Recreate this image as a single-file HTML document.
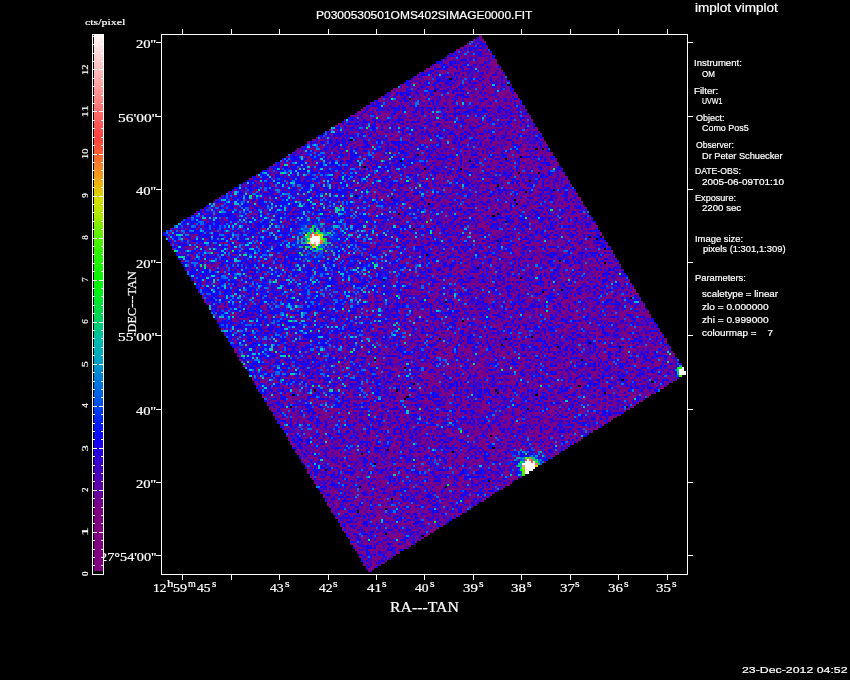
<!DOCTYPE html>
<html>
<head>
<meta charset="utf-8">
<style>
html,body{margin:0;padding:0;background:#000;}
body{width:850px;height:680px;position:relative;overflow:hidden;}
.L{position:absolute;left:0;top:0;}
.t{position:absolute;color:#fff;white-space:pre;line-height:1;transform-origin:0 0;-webkit-text-stroke:0.2px #fff;}
</style>
</head>
<body>
<svg id="fb" class="L" width="850" height="680">
<polygon points="481,35 686.5,373.5 368.8,572.6 163,233" fill="#5a0aa0"/>
</svg>
<canvas id="cv" class="L" width="850" height="680"></canvas>
<div class="L" style="width:850px;height:680px">
<div class="t" style="left:316.47px;top:10.25px;font-family:'Liberation Sans',sans-serif;font-size:10.6px;transform:scale(1.1305,0.9500)">P0300530501OMS402SIMAGE0000.FIT</div>
<div class="t" style="left:695.07px;top:1.80px;font-family:'Liberation Sans',sans-serif;font-size:12px;transform:scale(1.1278,1.0000)">implot vimplot</div>
<div class="t" style="left:742.20px;top:665.80px;font-family:'Liberation Sans',sans-serif;font-size:10px;transform:scale(1.2329,0.8875)">23-Dec-2012 04:52</div>
<div class="t" style="left:694.49px;top:59.32px;font-family:'Liberation Sans',sans-serif;font-size:8.6px;transform:scale(1.1122,0.9833)">Instrument:</div>
<div class="t" style="left:702.00px;top:69.62px;font-family:'Liberation Sans',sans-serif;font-size:8.6px;transform:scale(0.9308,0.9833)">OM</div>
<div class="t" style="left:694.47px;top:87.10px;font-family:'Liberation Sans',sans-serif;font-size:8.6px;transform:scale(1.1300,0.9833)">Filter:</div>
<div class="t" style="left:701.88px;top:96.62px;font-family:'Liberation Sans',sans-serif;font-size:8.6px;transform:scale(0.8208,0.9833)">UVW1</div>
<div class="t" style="left:695.80px;top:113.90px;font-family:'Liberation Sans',sans-serif;font-size:8.6px;transform:scale(1.0481,0.9833)">Object:</div>
<div class="t" style="left:702.00px;top:123.92px;font-family:'Liberation Sans',sans-serif;font-size:8.6px;transform:scale(1.0400,0.9833)">Como Pos5</div>
<div class="t" style="left:695.80px;top:141.20px;font-family:'Liberation Sans',sans-serif;font-size:8.6px;transform:scale(1.0027,0.9833)">Observer:</div>
<div class="t" style="left:701.83px;top:151.90px;font-family:'Liberation Sans',sans-serif;font-size:8.6px;transform:scale(1.0743,0.9833)">Dr Peter Schuecker</div>
<div class="t" style="left:694.80px;top:167.12px;font-family:'Liberation Sans',sans-serif;font-size:8.6px;transform:scale(1.0045,0.9833)">DATE-OBS:</div>
<div class="t" style="left:702.40px;top:177.52px;font-family:'Liberation Sans',sans-serif;font-size:8.6px;transform:scale(1.1592,0.9833)">2005-06-09T01:10</div>
<div class="t" style="left:694.74px;top:193.72px;font-family:'Liberation Sans',sans-serif;font-size:8.6px;transform:scale(1.0595,0.9833)">Exposure:</div>
<div class="t" style="left:702.40px;top:204.42px;font-family:'Liberation Sans',sans-serif;font-size:8.6px;transform:scale(1.1235,0.9833)">2200 sec</div>
<div class="t" style="left:694.70px;top:235.30px;font-family:'Liberation Sans',sans-serif;font-size:8.6px;transform:scale(1.0952,0.9833)">Image size:</div>
<div class="t" style="left:702.70px;top:245.00px;font-family:'Liberation Sans',sans-serif;font-size:8.6px;transform:scale(1.0933,0.9833)">pixels (1:301,1:309)</div>
<div class="t" style="left:694.71px;top:274.22px;font-family:'Liberation Sans',sans-serif;font-size:8.6px;transform:scale(1.0867,0.9833)">Parameters:</div>
<div class="t" style="left:701.80px;top:289.60px;font-family:'Liberation Sans',sans-serif;font-size:8.6px;transform:scale(1.1313,0.9833)">scaletype = linear</div>
<div class="t" style="left:701.80px;top:302.60px;font-family:'Liberation Sans',sans-serif;font-size:8.6px;transform:scale(1.1750,0.9833)">zlo = 0.000000</div>
<div class="t" style="left:701.80px;top:315.90px;font-family:'Liberation Sans',sans-serif;font-size:8.6px;transform:scale(1.1750,0.9833)">zhi = 0.999000</div>
<div class="t" style="left:701.80px;top:329.40px;font-family:'Liberation Sans',sans-serif;font-size:8.6px;transform:scale(1.1468,0.9833)">colourmap =    7</div>
<div class="t" style="left:389.93px;top:599.52px;font-family:'Liberation Serif',serif;font-size:13.5px;transform:scale(1.1702,1.1250)">RA---TAN</div>
<div class="t" style="left:0;top:0;font-family:'Liberation Serif',serif;font-size:12px;transform:translate(125.93px,332.53px) rotate(-90deg) scale(1.0276,0.9875)">DEC---TAN</div>
<div class="t" style="left:84.90px;top:18.80px;font-family:'Liberation Serif',serif;font-size:9.5px;transform:scale(1.2531,0.9000)">cts/pixel</div>
<div class="t" style="left:136.20px;top:38.35px;font-family:'Liberation Serif',serif;font-size:12.5px;transform:scale(1.1647,0.9750)">20''</div>
<div class="t" style="left:117.66px;top:111.61px;font-family:'Liberation Serif',serif;font-size:12.5px;transform:scale(1.2367,0.9750)">56'00''</div>
<div class="t" style="left:136.20px;top:184.87px;font-family:'Liberation Serif',serif;font-size:12.5px;transform:scale(1.1647,0.9750)">40''</div>
<div class="t" style="left:136.20px;top:258.13px;font-family:'Liberation Serif',serif;font-size:12.5px;transform:scale(1.1647,0.9750)">20''</div>
<div class="t" style="left:117.66px;top:331.39px;font-family:'Liberation Serif',serif;font-size:12.5px;transform:scale(1.2367,0.9750)">55'00''</div>
<div class="t" style="left:136.20px;top:404.65px;font-family:'Liberation Serif',serif;font-size:12.5px;transform:scale(1.1647,0.9750)">40''</div>
<div class="t" style="left:136.20px;top:477.91px;font-family:'Liberation Serif',serif;font-size:12.5px;transform:scale(1.1647,0.9750)">20''</div>
<div class="t" style="left:100.00px;top:551.17px;font-family:'Liberation Serif',serif;font-size:12.5px;transform:scale(1.1429,0.9750)">27&deg;54'00''</div>
<div class="t" style="left:152.57px;top:581.88px;font-family:'Liberation Serif',serif;font-size:12.0px;transform:scale(1.1273,1.0125)">12</div>
<div class="t" style="left:166.90px;top:578.97px;font-family:'Liberation Serif',serif;font-size:9.0px;transform:scale(1.4500,1.1333)">h</div>
<div class="t" style="left:172.74px;top:581.88px;font-family:'Liberation Serif',serif;font-size:12.0px;transform:scale(1.1636,1.0125)">59</div>
<div class="t" style="left:188.30px;top:579.38px;font-family:'Liberation Serif',serif;font-size:9.0px;transform:scale(1.1143,1.0750)">m</div>
<div class="t" style="left:197.40px;top:581.88px;font-family:'Liberation Serif',serif;font-size:12.0px;transform:scale(1.1333,1.0125)">45</div>
<div class="t" style="left:212.20px;top:579.38px;font-family:'Liberation Serif',serif;font-size:9.0px;transform:scale(1.2333,1.0750)">s</div>
<div class="t" style="left:270.16px;top:581.88px;font-family:'Liberation Serif',serif;font-size:12.0px;transform:scale(1.1333,1.0125)">43</div>
<div class="t" style="left:284.86px;top:579.02px;font-family:'Liberation Serif',serif;font-size:9.0px;transform:scale(1.3000,1.1250)">s</div>
<div class="t" style="left:318.59px;top:581.88px;font-family:'Liberation Serif',serif;font-size:12.0px;transform:scale(1.1333,1.0125)">42</div>
<div class="t" style="left:333.29px;top:579.02px;font-family:'Liberation Serif',serif;font-size:9.0px;transform:scale(1.3000,1.1250)">s</div>
<div class="t" style="left:367.02px;top:581.88px;font-family:'Liberation Serif',serif;font-size:12.0px;transform:scale(1.2364,1.0125)">41</div>
<div class="t" style="left:381.72px;top:579.02px;font-family:'Liberation Serif',serif;font-size:9.0px;transform:scale(1.3000,1.1250)">s</div>
<div class="t" style="left:415.45px;top:581.88px;font-family:'Liberation Serif',serif;font-size:12.0px;transform:scale(1.1333,1.0125)">40</div>
<div class="t" style="left:430.15px;top:579.02px;font-family:'Liberation Serif',serif;font-size:9.0px;transform:scale(1.3000,1.1250)">s</div>
<div class="t" style="left:462.64px;top:581.88px;font-family:'Liberation Serif',serif;font-size:12.0px;transform:scale(1.2364,1.0125)">39</div>
<div class="t" style="left:478.58px;top:579.02px;font-family:'Liberation Serif',serif;font-size:9.0px;transform:scale(1.3000,1.1250)">s</div>
<div class="t" style="left:511.07px;top:581.88px;font-family:'Liberation Serif',serif;font-size:12.0px;transform:scale(1.2364,1.0125)">38</div>
<div class="t" style="left:527.01px;top:579.02px;font-family:'Liberation Serif',serif;font-size:9.0px;transform:scale(1.3000,1.1250)">s</div>
<div class="t" style="left:559.50px;top:581.88px;font-family:'Liberation Serif',serif;font-size:12.0px;transform:scale(1.2364,1.0125)">37</div>
<div class="t" style="left:575.44px;top:579.02px;font-family:'Liberation Serif',serif;font-size:9.0px;transform:scale(1.3000,1.1250)">s</div>
<div class="t" style="left:607.93px;top:581.88px;font-family:'Liberation Serif',serif;font-size:12.0px;transform:scale(1.2364,1.0125)">36</div>
<div class="t" style="left:623.87px;top:579.02px;font-family:'Liberation Serif',serif;font-size:9.0px;transform:scale(1.3000,1.1250)">s</div>
<div class="t" style="left:656.36px;top:581.88px;font-family:'Liberation Serif',serif;font-size:12.0px;transform:scale(1.2364,1.0125)">35</div>
<div class="t" style="left:672.30px;top:579.02px;font-family:'Liberation Serif',serif;font-size:9.0px;transform:scale(1.3000,1.1250)">s</div>
<div class="t" style="left:0;top:0;font-family:'Liberation Serif',serif;font-size:8.6px;transform:translate(81.48px,576.00px) rotate(-90deg) scale(1.0500,0.9167)">0</div>
<div class="t" style="left:0;top:0;font-family:'Liberation Serif',serif;font-size:8.6px;transform:translate(81.48px,536.06px) rotate(-90deg) scale(2.1000,0.9167)">1</div>
<div class="t" style="left:0;top:0;font-family:'Liberation Serif',serif;font-size:8.6px;transform:translate(81.48px,491.92px) rotate(-90deg) scale(1.0500,0.9167)">2</div>
<div class="t" style="left:0;top:0;font-family:'Liberation Serif',serif;font-size:8.6px;transform:translate(81.48px,451.28px) rotate(-90deg) scale(1.4000,0.9167)">3</div>
<div class="t" style="left:0;top:0;font-family:'Liberation Serif',serif;font-size:8.6px;transform:translate(81.48px,407.84px) rotate(-90deg) scale(1.0500,0.9167)">4</div>
<div class="t" style="left:0;top:0;font-family:'Liberation Serif',serif;font-size:8.6px;transform:translate(81.48px,367.20px) rotate(-90deg) scale(1.4000,0.9167)">5</div>
<div class="t" style="left:0;top:0;font-family:'Liberation Serif',serif;font-size:8.6px;transform:translate(81.48px,323.76px) rotate(-90deg) scale(1.0500,0.9167)">6</div>
<div class="t" style="left:0;top:0;font-family:'Liberation Serif',serif;font-size:8.6px;transform:translate(81.48px,281.72px) rotate(-90deg) scale(1.0500,0.9167)">7</div>
<div class="t" style="left:0;top:0;font-family:'Liberation Serif',serif;font-size:8.6px;transform:translate(81.48px,239.68px) rotate(-90deg) scale(1.0500,0.9167)">8</div>
<div class="t" style="left:0;top:0;font-family:'Liberation Serif',serif;font-size:8.6px;transform:translate(81.48px,197.64px) rotate(-90deg) scale(1.0500,0.9167)">9</div>
<div class="t" style="left:0;top:0;font-family:'Liberation Serif',serif;font-size:8.6px;transform:translate(81.48px,158.96px) rotate(-90deg) scale(1.2143,0.9167)">10</div>
<div class="t" style="left:0;top:0;font-family:'Liberation Serif',serif;font-size:8.6px;transform:translate(81.48px,117.13px) rotate(-90deg) scale(1.4167,0.9167)">11</div>
<div class="t" style="left:0;top:0;font-family:'Liberation Serif',serif;font-size:8.6px;transform:translate(81.48px,74.88px) rotate(-90deg) scale(1.2143,0.9167)">12</div>
</div>
<svg class="L" width="850" height="680" shape-rendering="crispEdges">
<defs><linearGradient id="cg" x1="0" y1="1" x2="0" y2="0">
<stop offset="0.0000" stop-color="rgb(128,0,128)"/>
<stop offset="0.1122" stop-color="rgb(128,0,128)"/>
<stop offset="0.1436" stop-color="rgb(105,0,155)"/>
<stop offset="0.1750" stop-color="rgb(78,0,182)"/>
<stop offset="0.2142" stop-color="rgb(45,0,215)"/>
<stop offset="0.2456" stop-color="rgb(15,5,248)"/>
<stop offset="0.2809" stop-color="rgb(0,35,245)"/>
<stop offset="0.3162" stop-color="rgb(0,85,235)"/>
<stop offset="0.3632" stop-color="rgb(0,130,215)"/>
<stop offset="0.4024" stop-color="rgb(0,170,190)"/>
<stop offset="0.4338" stop-color="rgb(0,190,170)"/>
<stop offset="0.4495" stop-color="rgb(0,200,130)"/>
<stop offset="0.4887" stop-color="rgb(0,220,70)"/>
<stop offset="0.5279" stop-color="rgb(0,245,10)"/>
<stop offset="0.5907" stop-color="rgb(40,245,0)"/>
<stop offset="0.6377" stop-color="rgb(110,238,0)"/>
<stop offset="0.6613" stop-color="rgb(170,232,0)"/>
<stop offset="0.6926" stop-color="rgb(215,222,0)"/>
<stop offset="0.7201" stop-color="rgb(235,180,15)"/>
<stop offset="0.7554" stop-color="rgb(245,130,40)"/>
<stop offset="0.7868" stop-color="rgb(255,85,55)"/>
<stop offset="0.8103" stop-color="rgb(255,65,65)"/>
<stop offset="0.8574" stop-color="rgb(255,110,110)"/>
<stop offset="0.9044" stop-color="rgb(255,160,160)"/>
<stop offset="0.9515" stop-color="rgb(255,205,205)"/>
<stop offset="1.0000" stop-color="rgb(255,248,248)"/>
</linearGradient></defs>
<rect x="92" y="34" width="12" height="541" fill="#000"/>
<rect x="94" y="35" width="9" height="536" fill="url(#cg)"/>
<g stroke="#fff" stroke-width="1" fill="none">
<path d="M161.5 34.5H687.5V574.5H161.5Z"/>
<path d="M182.5 29V34M182.5 575V580M231.5 29V34M231.5 575V580M279.5 29V34M279.5 575V580M328.5 29V34M328.5 575V580M376.5 29V34M376.5 575V580M424.5 29V34M424.5 575V580M473.5 29V34M473.5 575V580M521.5 29V34M521.5 575V580M570.5 29V34M570.5 575V580M618.5 29V34M618.5 575V580M667.5 29V34M667.5 575V580M156 42.5H161M688 42.5H693M156 116.5H161M688 116.5H693M156 189.5H161M688 189.5H693M156 262.5H161M688 262.5H693M156 335.5H161M688 335.5H693M156 409.5H161M688 409.5H693M156 482.5H161M688 482.5H693M156 555.5H161M688 555.5H693"/>
<path d="M92.5 34.5H103.5V574.5H92.5Z"/>
<path d="M93 574.5H97M99 574.5H103M93 565.5H95M101 565.5H103M93 557.5H95M101 557.5H103M93 549.5H95M101 549.5H103M93 540.5H95M101 540.5H103M93 532.5H97M99 532.5H103M93 523.5H95M101 523.5H103M93 515.5H95M101 515.5H103M93 507.5H95M101 507.5H103M93 498.5H95M101 498.5H103M93 490.5H97M99 490.5H103M93 481.5H95M101 481.5H103M93 473.5H95M101 473.5H103M93 465.5H95M101 465.5H103M93 456.5H95M101 456.5H103M93 448.5H97M99 448.5H103M93 439.5H95M101 439.5H103M93 431.5H95M101 431.5H103M93 423.5H95M101 423.5H103M93 414.5H95M101 414.5H103M93 406.5H97M99 406.5H103M93 397.5H95M101 397.5H103M93 389.5H95M101 389.5H103M93 381.5H95M101 381.5H103M93 372.5H95M101 372.5H103M93 364.5H97M99 364.5H103M93 355.5H95M101 355.5H103M93 347.5H95M101 347.5H103M93 338.5H95M101 338.5H103M93 330.5H95M101 330.5H103M93 322.5H97M99 322.5H103M93 313.5H95M101 313.5H103M93 305.5H95M101 305.5H103M93 296.5H95M101 296.5H103M93 288.5H95M101 288.5H103M93 280.5H97M99 280.5H103M93 271.5H95M101 271.5H103M93 263.5H95M101 263.5H103M93 254.5H95M101 254.5H103M93 246.5H95M101 246.5H103M93 238.5H97M99 238.5H103M93 229.5H95M101 229.5H103M93 221.5H95M101 221.5H103M93 212.5H95M101 212.5H103M93 204.5H95M101 204.5H103M93 196.5H97M99 196.5H103M93 187.5H95M101 187.5H103M93 179.5H95M101 179.5H103M93 170.5H95M101 170.5H103M93 162.5H95M101 162.5H103M93 154.5H97M99 154.5H103M93 145.5H95M101 145.5H103M93 137.5H95M101 137.5H103M93 128.5H95M101 128.5H103M93 120.5H95M101 120.5H103M93 111.5H97M99 111.5H103M93 103.5H95M101 103.5H103M93 95.5H95M101 95.5H103M93 86.5H95M101 86.5H103M93 78.5H95M101 78.5H103M93 69.5H97M99 69.5H103M93 61.5H95M101 61.5H103M93 53.5H95M101 53.5H103M93 44.5H95M101 44.5H103M93 36.5H95M101 36.5H103"/>
</g>
</svg>
<script>
(function(){
  var P={"fallback": "#5a0aa0", "cmap": [[0, 128, 0, 128], [1.5, 128, 0, 128], [1.9, 105, 0, 155], [2.3, 78, 0, 182], [2.8, 45, 0, 215], [3.2, 15, 5, 248], [3.65, 0, 35, 245], [4.1, 0, 85, 235], [4.7, 0, 130, 215], [5.2, 0, 170, 190], [5.6, 0, 190, 170], [5.8, 0, 200, 130], [6.3, 0, 220, 70], [6.8, 0, 245, 10], [7.6, 40, 245, 0], [8.2, 110, 238, 0], [8.5, 170, 232, 0], [8.9, 215, 222, 0], [9.25, 235, 180, 15], [9.7, 245, 130, 40], [10.1, 255, 85, 55], [10.4, 255, 65, 65], [11.0, 255, 110, 110], [11.6, 255, 160, 160], [12.2, 255, 205, 205], [12.82, 255, 248, 248]], "B": 2.3, "bg": 1.8, "halo": [250, 250, 1.8, 85], "stars": [[315.7, 239.9, 16, 3.2, 3.5, 6.5, 1.0, 14], [529.5, 466.7, 26, 4, 4, 8, 1.0, 14], [684, 372, 25, 3, 3, 6, 0, 10]], "black": 0.004, "jitter": 0.15, "seed": 987654321, "a": 0.8, "classes": {"v": [0.8, 2.1, 3.2, 4.3, 5.2, 6.9], "lr": [0.47, 0.22, 0.275, 0.03, 0.004, 0.0005], "ul": [0.2, 0.1, 0.5, 0.12, 0.07, 0.01], "col": [[128, 0, 128], [84, 0, 176], [16, 0, 245], [0, 105, 245], [0, 195, 215], [0, 235, 100]]}, "Bx": 2.15, "By": 2.05};
  var cv=document.getElementById('cv');
  if(!cv||!cv.getContext) return;
  var ctx=cv.getContext('2d');
  var s=P.seed>>>0;
  function rnd(){ s^=s<<13; s>>>=0; s^=s>>>17; s^=s<<5; s>>>=0; return s/4294967296; }
  var Q=[[481,35],[686.5,373.5],[368.8,572.6],[163,233]];
  function inside(x,y){
    var c=false;
    for(var i=0,j=3;i<4;j=i++){
      var xi=Q[i][0],yi=Q[i][1],xj=Q[j][0],yj=Q[j][1];
      if(((yi>y)!=(yj>y)) && (x < (xj-xi)*(y-yi)/(yj-yi)+xi)) c=!c;
    }
    return c;
  }
  var cm=P.cmap;
  function cmap(v){
    if(v<=cm[0][0]) return [cm[0][1],cm[0][2],cm[0][3]];
    for(var i=1;i<cm.length;i++){
      if(v<=cm[i][0]){
        var a=cm[i-1],b=cm[i],t=(v-a[0])/(b[0]-a[0]);
        return [a[1]+(b[1]-a[1])*t,a[2]+(b[2]-a[2])*t,a[3]+(b[3]-a[3])*t];
      }
    }
    return [255,255,255];
  }
  var H=P.halo, ST=P.stars, CL=P.classes;
  function halo(x,y){ var dx=x-H[0],dy=y-H[1]; return H[2]*Math.exp(-(dx*dx+dy*dy)/(2*H[3]*H[3])); }
  function star(x,y){
    var l=0;
    for(var i=0;i<ST.length;i++){
      var st=ST[i]; var d=(x-st[0])*(x-st[0])+(y-st[1])*(y-st[1]);
      l+=st[2]*Math.exp(-d/(2*st[3]*st[3]))+st[4]*Math.exp(-d/(2*st[5]*st[5]))+st[6]*Math.exp(-d/(2*st[7]*st[7]));
    }
    return l;
  }
  var Bx=P.Bx||P.B, By=P.By||P.B;
  var nx=Math.ceil(850/Bx)+1, ny=Math.ceil(680/By)+1;
  var img=ctx.createImageData(850,680);
  var D=img.data;
  var nc=CL.v.length;
  for(var j=0;j<ny;j++){
    var y0=Math.round(j*By), y1=Math.round((j+1)*By);
    if(y1>680) y1=680;
    if(y1<=y0) continue;
    for(var i=0;i<nx;i++){
      var x0=Math.round(i*Bx), x1=Math.round((i+1)*Bx);
      if(x1>850) x1=850;
      if(x1<=x0) continue;
      var cx=(x0+x1)/2, cy=(y0+y1)/2;
      var r1=rnd(), r2=rnd(), r3=rnd(), r4=rnd();
      if(x0<162||x1>687||cy<35||cy>574||!inside(cx,cy)) continue;
      var t=Math.min(1,halo(cx,cy));
      var sl=star(cx,cy);
      var col;
      if(r1<P.black*(1-t) && sl<0.3){ col=[0,0,0]; }
      else {
        var acc=0,k=0;
        for(k=0;k<nc;k++){
          acc+=CL.lr[k]*(1-t)+CL.ul[k]*t;
          if(r2<acc) break;
        }
        if(k>=nc) k=nc-1;
        if(sl>0.25){
          var v=CL.v[k]+(r3-0.5)*0.4+sl*(0.6+0.8*r4);
          col=cmap(v);
        } else {
          var c0=CL.col[k], c1=CL.col[Math.min(nc-1,k+1)], c2=CL.col[Math.max(0,k-1)];
          var w=(r3-0.5)*0.5;
          if(w>0) col=[c0[0]+(c1[0]-c0[0])*w,c0[1]+(c1[1]-c0[1])*w,c0[2]+(c1[2]-c0[2])*w];
          else col=[c0[0]-(c2[0]-c0[0])*w,c0[1]-(c2[1]-c0[1])*w,c0[2]-(c2[2]-c0[2])*w];
        }
      }
      for(var yy=y0;yy<y1;yy++)for(var xx=x0;xx<x1;xx++){
        var kk=(yy*850+xx)*4; D[kk]=col[0];D[kk+1]=col[1];D[kk+2]=col[2];D[kk+3]=255;
      }
    }
  }
  ctx.putImageData(img,0,0);
  var fb=document.getElementById('fb'); if(fb) fb.style.display='none';
})();

</script>
</body>
</html>
